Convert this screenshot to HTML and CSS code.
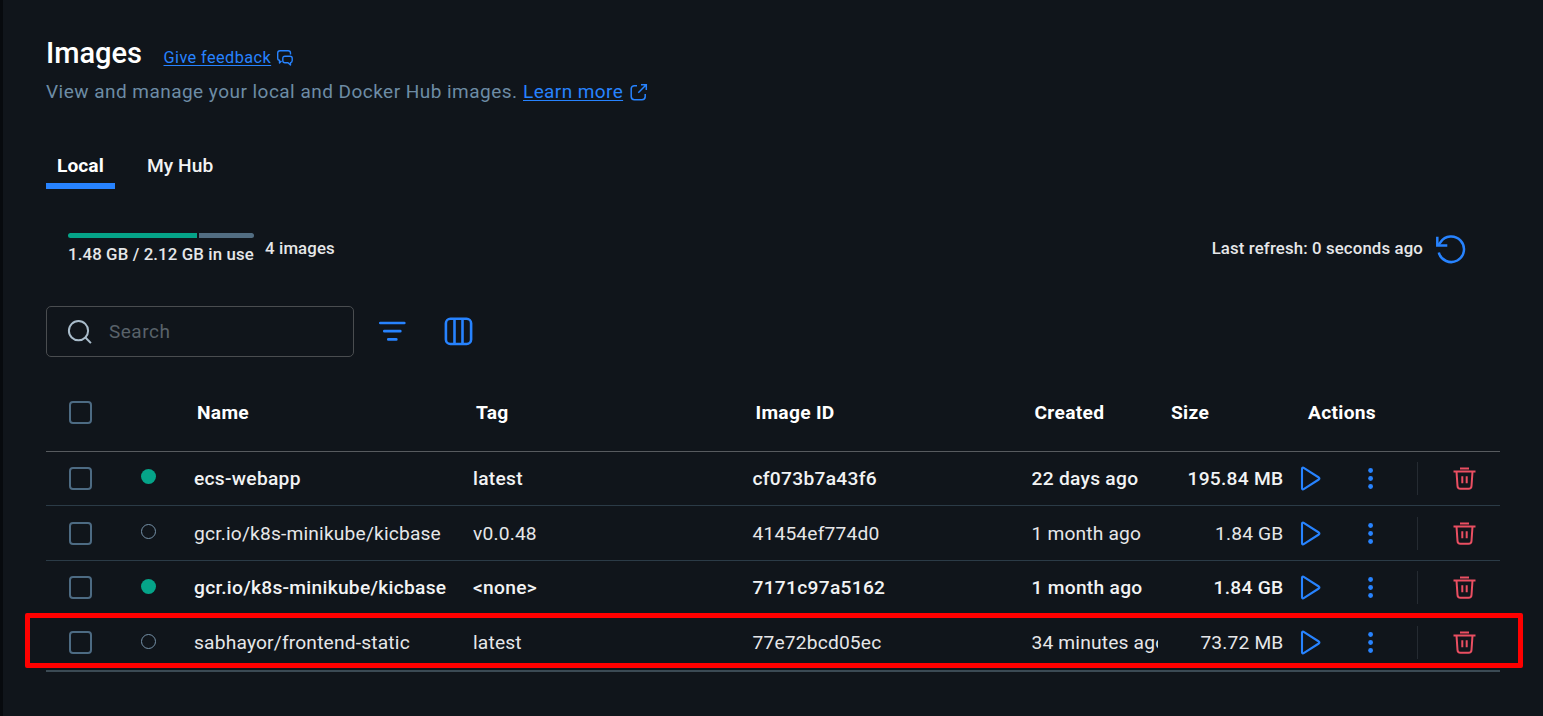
FILE: index.html
```html
<!DOCTYPE html>
<html lang="en">
<head>
<meta charset="utf-8">
<title>Images</title>
<link rel="stylesheet" href="styles.css">
</head>
<body>
<svg width="0" height="0" class="sprite">
  <symbol id="play" viewBox="0 0 24 28"><path d="M3 3.700v19.600c0 1 .9 1.400 1.700.9L19.800 14.500c.8-.6.8-1.400 0-2L4.700 2.800C3.900 2.300 3 2.700 3 3.700z" fill="none" stroke="currentColor" stroke-width="2.100" stroke-linejoin="round"/></symbol>
  <symbol id="dots" viewBox="0 0 8 24"><circle cx="3.600" cy="3.500" r="2.400"/><circle cx="3.600" cy="11.500" r="2.400"/><circle cx="3.600" cy="19.500" r="2.400"/></symbol>
  <symbol id="trash" viewBox="0 0 24 26"><path d="M8 2.500h9M1.500 5.500h22M4.500 5.500l1 14.500c.1 1.900 1.200 2.800 3 2.800h8c1.800 0 2.900-.9 3-2.800l1-14.500M10.300 10.300v7M14.700 10.300v7" fill="none" stroke="currentColor" stroke-width="2"/></symbol>
</svg>
<main class="page">
  <header class="head">
    <h1 class="title">Images</h1>
    <a class="feedback">Give feedback</a>
    <svg class="chat" width="18" height="18" viewBox="0 0 18 18" fill="none" stroke="currentColor" stroke-width="1.400" stroke-linejoin="round"><path d="M14.500 5.500V4c0-1.500-.8-2.300-2.300-2.300H4C2.500 1.700 1.700 2.500 1.700 4v5c0 1.500.6 2.200 1.800 2.300V14l2-2"/><path d="M9 7.200h5c1.500 0 2.200.7 2.200 2.100v2.200c0 1.400-.6 2-1.700 2.100V16l-2.500-2.300H9c-1.500 0-2.200-.7-2.200-2.200V9.300C6.800 7.900 7.500 7.200 9 7.200z"/></svg>
  </header>
  <p class="sub"><span class="subtext">View and manage your local and Docker Hub images.</span><a class="learn">Learn more</a>
    <svg class="external" width="18" height="18" viewBox="0 0 18 18" fill="none" stroke="currentColor" stroke-width="1.500"><path d="M7 2.800H4.500C2.500 2.800 1.200 4 1.200 5.800v7.700c0 2 1.200 3.200 3.200 3.200h7.600c2 0 3.200-1.200 3.200-3.200V11M8.300 9.700l7.700-7.700M11 1.700h5.300V7"/></svg>
  </p>
  <nav class="tabs"><a class="tab active">Local</a><a class="tab hub">My Hub</a></nav>
  <section class="status">
    <div class="usage"><div class="bar"><i class="used"></i><i class="rest"></i></div><span class="usage-text">1.48 GB / 2.12 GB in use</span></div>
    <span class="count">4 images</span>
    <span class="refresh">Last refresh: 0 seconds ago</span>
    <svg class="reload" width="32" height="32" viewBox="0 0 32 32" fill="none" stroke="currentColor" stroke-width="2.500"><path d="M3.800 19.500A12.800 12.800 0 1 0 5.500 9.200L3.200 12.200"/><path d="M2.300 3.800v8.800h10"/></svg>
  </section>
  <section class="tools">
    <label class="search"><svg width="26" height="26" viewBox="0 0 26 26" fill="none" stroke="currentColor" stroke-width="2"><circle cx="11.500" cy="11.700" r="9.600"/><path d="M18.200 18.300l5.700 5.800"/></svg><span>Search</span></label>
    <svg class="filter" width="28" height="24" viewBox="0 0 28 24" stroke="currentColor" stroke-width="2.700" stroke-linecap="round"><path d="M2.300 4h24M6.300 12.200h16M10.300 20.400h8"/></svg>
    <svg class="columns" width="30" height="30" viewBox="0 0 30 30" fill="none" stroke="currentColor" stroke-width="2.600"><rect x="1.900" y="2.800" width="25.200" height="25.200" rx="4.500"/><path d="M10.500 2.800V28M18.500 2.800V28"/></svg>
  </section>
  <section class="table">
    <div class="row thead"><i class="check"></i><span></span><span class="name">Name</span><span class="tag">Tag</span><span class="id">Image ID</span><span class="created">Created</span><span class="hsize">Size</span><span class="hactions">Actions</span></div>
    <div class="row strong short"><i class="check"></i><i class="dot on"></i><span class="name">ecs-webapp</span><span class="tag">latest</span><span class="id">cf073b7a43f6</span><span class="created">22 days ago</span><span class="size">195.84 MB</span><svg class="play"><use href="#play"/></svg><svg class="dots"><use href="#dots"/></svg><i class="divider"></i><svg class="trash"><use href="#trash"/></svg></div>
    <div class="row"><i class="check"></i><i class="dot"></i><span class="name">gcr.io/k8s-minikube/kicbase</span><span class="tag">v0.0.48</span><span class="id">41454ef774d0</span><span class="created">1 month ago</span><span class="size">1.84 GB</span><svg class="play"><use href="#play"/></svg><svg class="dots"><use href="#dots"/></svg><i class="divider"></i><svg class="trash"><use href="#trash"/></svg></div>
    <div class="row strong short"><i class="check"></i><i class="dot on low"></i><span class="name">gcr.io/k8s-minikube/kicbase</span><span class="tag">&lt;none&gt;</span><span class="id">7171c97a5162</span><span class="created">1 month ago</span><span class="size">1.84 GB</span><svg class="play"><use href="#play"/></svg><svg class="dots"><use href="#dots"/></svg><i class="divider"></i><svg class="trash"><use href="#trash"/></svg></div>
    <div class="row last"><i class="check"></i><i class="dot low"></i><span class="name">sabhayor/frontend-static</span><span class="tag">latest</span><span class="id">77e72bcd05ec</span><span class="created">34 minutes ago</span><span class="size">73.72 MB</span><svg class="play"><use href="#play"/></svg><svg class="dots"><use href="#dots"/></svg><i class="divider"></i><svg class="trash"><use href="#trash"/></svg><i class="highlight"></i></div>
  </section>
</main>
</body>
</html>
```
FILE: styles.css
```css
* { box-sizing: border-box; }
body { margin: 0; background: #10151b; color: #e6e7e9; font-family: Roboto, sans-serif; font-size: 19px; overflow: hidden; }
.sprite { position: absolute; }
svg { display: block; flex: none; }
.page { height: 716px; padding: 32px 43px 0; border-left: 3px solid #070a0e; }
.head { display: flex; height: 42px; align-items: center; color: #2783ff; }
.title { margin: 0; width: 117.500px; font-size: 29px; font-weight: 500; color: #fff; white-space: nowrap; }
.feedback { margin-top: 8px; font-size: 16.300px; letter-spacing: .42px; text-decoration: underline; text-underline-offset: 2px; }
.chat { margin: 10px 0 0 5px; }
.sub { display: flex; align-items: center; margin: 2px 0 0; height: 30px; color: #2783ff; letter-spacing: .4px; white-space: nowrap; }
.subtext { width: 477px; color: #6d8ca5; letter-spacing: .47px; }
.learn { margin-right: 6px; text-decoration: underline; text-underline-offset: 2px; }
.external { margin: 2px 0 0 1px; }
.tabs { display: flex; margin-top: 37px; height: 46px; color: #f2f3f4; font-size: 19.200px; font-weight: 500; letter-spacing: .05px; }
.tab { height: 46px; padding: 0 11px; line-height: 45px; }
.active { width: 69px; border-bottom: 6px solid #2783ff; font-weight: 700; color: #fff; }
.hub { margin-left: 21px; }
.status { display: flex; align-items: center; height: 40px; margin-top: 39px; padding-left: 22px; font-size: 16.800px; font-weight: 500; letter-spacing: .13px; white-space: nowrap; }
.usage { width: 186px; height: 30px; }
.bar { display: flex; gap: 2px; height: 5px; }
.used { width: 129px; background: #05a489; border-radius: 3px 0 0 3px; }
.rest { flex: 1; background: #526d82; border-radius: 0 3px 3px 0; }
.usage-text { display: block; line-height: 20px; margin-top: 6px; }
.count { margin-left: 11px; }
.refresh { margin-left: auto; }
.reload { color: #2783ff; margin: 2px 33px 0 12px; }
.tools { display: flex; align-items: center; height: 51px; margin-top: 38px; color: #2783ff; }
.search { display: flex; align-items: center; gap: 16px; width: 308px; height: 51px; padding-left: 20px; border: 1px solid #4a4d50; border-radius: 5px; color: #a9bccb; }
.search span { color: #59626a; letter-spacing: .5px; }
.filter { margin: 0 0 1px 24px; }
.columns { margin: 0 0 1px 38px; }
.table { margin-top: 17px; width: 1454px; }
.row { position: relative; display: grid; grid-template-columns: 90px 58px 279px 279.500px 279px 126.500px 125.500px 60px 47px 41px 1fr; align-items: center; height: 55px; padding-top: 1px; border-bottom: 1px solid #2b3b47; font-size: 19.200px; line-height: 53px; letter-spacing: .18px; white-space: nowrap; }
.row.strong { font-weight: 500; letter-spacing: .28px; color: #f2f3f4; }
.row.thead { height: 78px; padding-top: 0; line-height: 76px; color: #fff; font-weight: 700; letter-spacing: .3px; border-color: #575b5f; }
.row.short { height: 54px; padding-top: 0; }
.short:nth-child(4) { border-color: transparent; }
.row.last { height: 57px; padding: 1px 0 2px; border-bottom: 2px solid #3b4a54; }
.check { width: 23px; height: 23px; margin-left: 23px; border: 2px solid #4d6b83; border-radius: 4px; }
.dot { width: 15px; height: 15px; margin: -5px 0 0 5.400px; border: 1.500px solid #7591a8; border-radius: 50%; }
.dot.low { margin-top: -3px; }
.dot.on { border: 0; background: #05a489; }
.thead .name, .thead .tag, .thead .id, .thead .created { padding-left: 3px; }
.created { overflow: hidden; }
.hsize { padding-left: 13px; }
.hactions { padding-left: 24.500px; }
.size { text-align: right; }
.play { width: 24px; height: 28px; margin-left: 15px; color: #2783ff; }
.dots { width: 8px; height: 24px; margin-left: 23px; fill: #2783ff; }
.divider { width: 1px; height: 33px; margin-left: 26px; background: #252b32; }
.trash { width: 24px; height: 26px; margin-left: 20.500px; color: #ea4f62; }
.highlight { position: absolute; left: -21px; top: -2px; width: 1498px; height: 55px; border: 5px solid #f00; border-radius: 2px; }
```
